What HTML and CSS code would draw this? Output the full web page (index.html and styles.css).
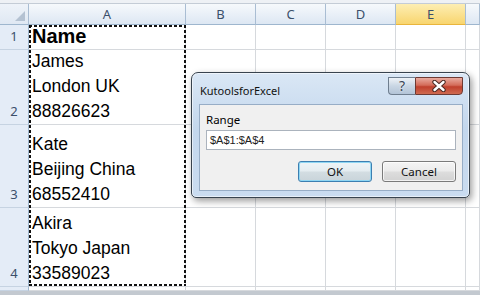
FILE: index.html
```html
<!DOCTYPE html>
<html lang="en">
<head>
  <meta charset="UTF-8">
  <meta name="viewport" content="width=device-width, initial-scale=1.0">
  <link rel="stylesheet" href="styles.css">
</head>
<body>
  <!-- Top strip above the sheet -->
  <div class="topbar"></div>

  <!-- Worksheet, laid out column by column -->
  <div class="sheet">
    <!-- Row numbers -->
    <div class="col col-rows">
      <div class="head corner"><span class="tri"></span></div>
      <div class="num r1">1</div>
      <div class="num r2">2</div>
      <div class="num r3">3</div>
      <div class="num r4">4</div>
      <div class="num tail"></div>
    </div>

    <!-- Column A with the dashed copy marquee -->
    <div class="col col-a">
      <div class="head">A</div>
      <div class="marquee">
        <div class="cell txt r1"><div class="bold">Name</div></div>
        <div class="cell txt r2"><div>James</div><div>London UK</div><div>88826623</div></div>
        <div class="cell txt r3"><div>Kate</div><div>Beijing China</div><div>68552410</div></div>
        <div class="cell txt r4"><div>Akira</div><div>Tokyo Japan</div><div>33589023</div></div>
      </div>
      <div class="cell tail"></div>
    </div>

    <div class="col">
      <div class="head">B</div>
      <div class="cell r1"></div><div class="cell r2"></div><div class="cell r3"></div><div class="cell r4"></div><div class="cell tail"></div>
    </div>
    <div class="col">
      <div class="head">C</div>
      <div class="cell r1"></div><div class="cell r2"></div><div class="cell r3"></div><div class="cell r4"></div><div class="cell tail"></div>
    </div>
    <div class="col">
      <div class="head">D</div>
      <div class="cell r1"></div><div class="cell r2"></div><div class="cell r3"></div><div class="cell r4"></div><div class="cell tail"></div>
    </div>
    <div class="col">
      <div class="head active">E</div>
      <div class="cell r1"></div><div class="cell r2"></div><div class="cell r3"></div><div class="cell r4"></div><div class="cell tail"></div>
    </div>
    <div class="col col-f">
      <div class="head"></div>
      <div class="cell r1"></div><div class="cell r2"></div><div class="cell r3"></div><div class="cell r4"></div><div class="cell tail"></div>
    </div>
  </div>

  <!-- Floating dialog window -->
  <div class="dialog">
    <div class="titlebar">
      <span class="title">KutoolsforExcel</span>
      <div class="caption-buttons">
        <div class="btn-help">?</div>
        <div class="btn-close">
          <svg width="16" height="12" viewBox="0 0 16 12">
            <path d="M3.5 2 L12.5 10 M12.5 2 L3.5 10" stroke="#4a2a24" stroke-width="4.4" stroke-linecap="round"/>
            <path d="M3.5 2 L12.5 10 M12.5 2 L3.5 10" stroke="#ffffff" stroke-width="2.4" stroke-linecap="round"/>
          </svg>
        </div>
      </div>
    </div>
    <div class="panel">
      <div class="label">Range</div>
      <div class="input">$A$1:$A$4</div>
      <div class="actions">
        <div class="button default">OK</div>
        <div class="button">Cancel</div>
      </div>
    </div>
  </div>
</body>
</html>
```

FILE: styles.css
```css
/* General */
body {
  margin: 0;
  height: 295px;
  overflow: hidden;
  position: relative;
  background-color: #c3c9d0;
  font-family: "Liberation Sans", Arial, sans-serif;
  color: #000000;
}

.topbar {
  height: 3px;
  background-color: #eef1f5;
  border-bottom: 1px solid #c4ccd6;
}

/* Sheet */
.sheet {
  display: flex;
  background-color: #FFFFFF;
}

.col {
  display: flex;
  flex-direction: column;
  width: 70px;
}

.col-rows {
  width: 29px;
}

.col-a {
  width: 157px;
}

.col-f {
  flex: 1;
}

.head {
  box-sizing: border-box;
  height: 21px;
  background: linear-gradient(#f6f9fc, #dde7f3);
  border-right: 1px solid #a9bdd3;
  border-bottom: 1px solid #9eb6ce;
  font-family: "Noto Sans", sans-serif;
  font-size: 13px;
  line-height: 20px;
  color: #3b4f6b;
  text-align: center;
}

.head.active {
  background: linear-gradient(#fdeeb3, #f8d56f);
  border-bottom-color: #e9b53c;
}

.corner {
  position: relative;
  background: linear-gradient(#eef3f9, #dfe8f3);
}

.corner .tri {
  position: absolute;
  right: 3px;
  bottom: 3px;
  width: 0;
  height: 0;
  border-left: 10px solid transparent;
  border-bottom: 10px solid #b4c2d2;
}

.cell, .num {
  box-sizing: border-box;
  border-right: 1px solid #d6d9dd;
  border-bottom: 1px solid #d6d9dd;
}

.num {
  background-color: #e4ecf7;
  border-right-color: #9eb6ce;
  border-bottom-color: #c6d3e2;
  display: flex;
  align-items: flex-end;
  justify-content: center;
  font-family: "Noto Sans", sans-serif;
  font-size: 13px;
  line-height: 25px;
  color: #3b4f6b;
}

.r1 { height: 25px; }
.r2 { height: 75px; }
.r3 { height: 83px; }
.r4 { height: 79px; }
.tail { height: 4px; }

.txt {
  display: flex;
  flex-direction: column;
  justify-content: flex-end;
  padding-left: 3px;
  font-size: 17.5px;
  line-height: 25px;
  white-space: nowrap;
}

.txt .bold {
  font-weight: bold;
  font-size: 20px;
}

/* Copy marquee around A1:A4 */
.marquee {
  position: relative;
  display: flex;
  flex-direction: column;
}

.marquee::after {
  content: "";
  position: absolute;
  top: 0;
  left: 0;
  right: 0;
  bottom: 1px;
  background:
    repeating-linear-gradient(90deg, #111 0 3px, transparent 3px 5px) top / 100% 2px no-repeat,
    repeating-linear-gradient(90deg, #111 0 3px, transparent 3px 5px) bottom / 100% 2px no-repeat,
    repeating-linear-gradient(180deg, #111 0 3px, transparent 3px 5px) left / 2px 100% no-repeat,
    repeating-linear-gradient(180deg, #111 0 3px, transparent 3px 5px) right / 2px 100% no-repeat;
}

/* Dialog */
.dialog {
  position: absolute;
  left: 191px;
  top: 72px;
  width: 279px;
  height: 126px;
  box-sizing: border-box;
  display: flex;
  flex-direction: column;
  border: 1px solid #38434e;
  border-radius: 7px 7px 5px 5px;
  background: linear-gradient(#dae7f5, #c3d7ed 45%, #cadcf0);
  box-shadow: 2px 3px 7px rgba(0, 0, 0, 0.4), inset 0 0 0 1px rgba(255, 255, 255, 0.55);
  font-family: "Noto Sans", sans-serif;
  font-size: 11.5px;
}

.titlebar {
  height: 31px;
  display: flex;
  padding-left: 8px;
}

.title {
  margin-top: 10px;
  line-height: 16px;
  font-size: 11px;
  color: #111111;
}

.caption-buttons {
  margin-left: auto;
  margin-top: 4px;
  margin-right: 6px;
  display: flex;
  height: 18px;
}

.btn-help {
  box-sizing: border-box;
  width: 27px;
  height: 18px;
  border: 1px solid #6f7e8f;
  border-right: none;
  border-radius: 0 0 0 4px;
  background: linear-gradient(#eef2f7, #c9d6e4 50%, #b3c4d7);
  color: #3a4552;
  text-align: center;
  line-height: 16px;
  font-size: 14px;
  text-shadow: 0 0 2px #ffffff;
}

.btn-close {
  box-sizing: border-box;
  width: 48px;
  height: 18px;
  border: 1px solid #6e3a33;
  border-radius: 0 0 4px 0;
  background: linear-gradient(#e9ab9f, #d46c5a 45%, #c0402d 55%, #cf6a50);
  display: flex;
  align-items: center;
  justify-content: center;
}

.panel {
  flex: 1;
  margin: 0 6px 6px 7px;
  padding: 7px 6px 0 6px;
  background-color: #f0f0f0;
  border: 1px solid #97adc6;
}

.label {
  line-height: 16px;
}

.input {
  box-sizing: border-box;
  margin-top: 2px;
  height: 20px;
  padding-left: 3px;
  background-color: #FFFFFF;
  border: 1px solid #abb3bd;
  font-family: "Liberation Sans", Arial, sans-serif;
  font-size: 11px;
  line-height: 18px;
  color: #222222;
}

.actions {
  display: flex;
  justify-content: flex-end;
  gap: 10px;
  margin-top: 11px;
}

.button {
  box-sizing: border-box;
  width: 74px;
  height: 21px;
  border: 1px solid #7a7a7a;
  border-radius: 3px;
  background: linear-gradient(#f4f4f4, #ebebeb 48%, #dddddd 52%, #d2d2d2);
  box-shadow: inset 0 0 0 1px rgba(255, 255, 255, 0.7);
  text-align: center;
  line-height: 19px;
  color: #111111;
}

.button.default {
  border-color: #3c7fb1;
  box-shadow: inset 0 0 0 1px #8fd6f3;
  background: linear-gradient(#eef4f7, #e4ecf0 48%, #d3dde2 52%, #c9d4da);
}
```
